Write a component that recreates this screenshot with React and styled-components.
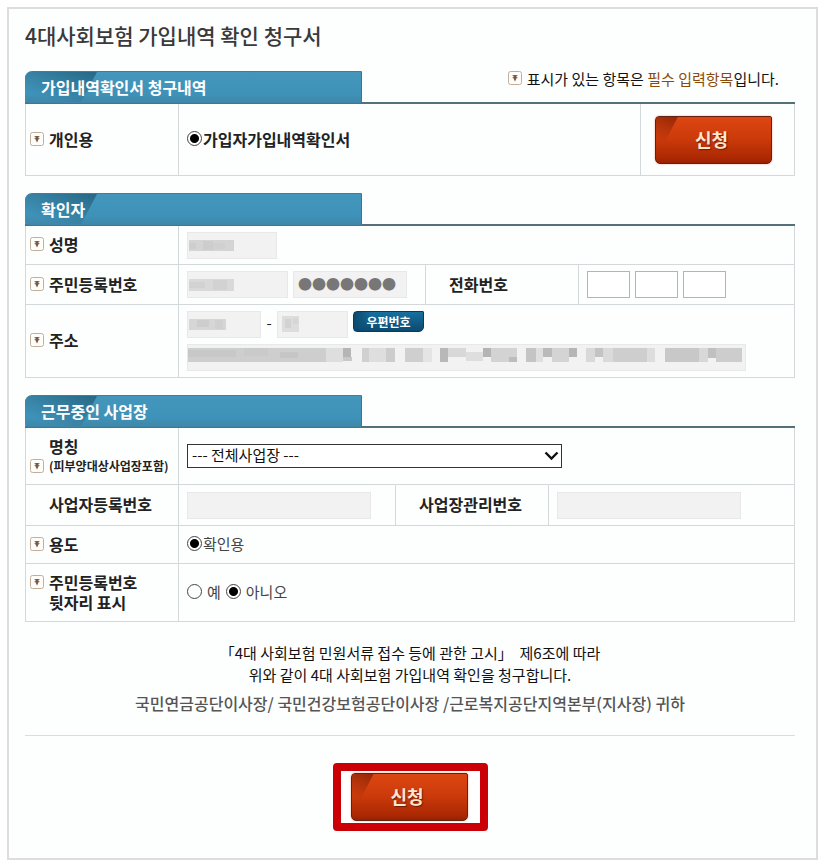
import React from 'react'
import styled, { createGlobalStyle, css } from 'styled-components'

const GlobalStyle = createGlobalStyle`
  * {
    box-sizing: border-box;
  }

  body {
    margin: 0;
    background: #fff;
    color: #222;
    font-family: "Noto Sans CJK KR", "Noto Sans", sans-serif;
    font-size: 15px;
  }

  input, select, button {
    margin: 0;
    font-family: inherit;
  }
`

const line = '#d3d8da'

const Frame = styled.main`
  margin: 7px;
  padding: 12px 21px 27px 16px;
  border: 2px solid #dddddd;
  background: #fdfefe;
`

const Title = styled.h1`
  margin: 0 0 22px;
  color: #3a3a3a;
  font-size: 21px;
  font-weight: 500;
  line-height: 28px;
`

const Section = styled.section`
  margin-bottom: 17px;
`

const SectionHead = styled.div`
  display: flex;
  align-items: flex-start;
  justify-content: space-between;
  height: 33px;
  border-bottom: 2px solid #56707a;
`

const Tab = styled.h2`
  position: relative;
  width: 337px;
  height: 33px;
  margin: 0;
  padding-left: 16px;
  overflow: hidden;
  border-top: 1px solid #3f7f9a;
  border-right: 1px solid #44728a;
  border-bottom: 1px solid #3b7894;
  border-radius: 7px 0 0 4px;
  background: linear-gradient(#4496bb, #3e92b9 70%, #3f86a8);
  color: #fff;
  font-size: 16px;
  font-weight: 700;
  line-height: 30px;

  &::before {
    content: "";
    position: absolute;
    top: 0;
    left: 0;
    width: 72px;
    height: 30px;
    background: linear-gradient(200deg, #286a88 5%, rgba(62, 146, 185, 0) 80%);
    clip-path: polygon(0 0, 100% 0, 78% 100%, 0 100%);
  }

  span {
    position: relative;
  }
`

const Hint = styled.p`
  display: flex;
  align-items: center;
  gap: 5px;
  margin: 0;
  padding-right: 16px;
  color: #111;
  line-height: 13px;

  em {
    color: #8a4b08;
    font-style: normal;
  }
`

const Rows = styled.div`
  border: solid ${line};
  border-width: 0 1px;
`

const Row = styled.div`
  display: flex;
  min-height: ${(p) => p.$height}px;
  border-bottom: 1px solid ${line};
`

const LabelCell = styled.div`
  display: flex;
  flex: none;
  align-items: ${(p) => p.$align || 'center'};
  gap: 5px;
  width: 153px;
  padding: ${(p) => (p.$align ? '8px 0 8px 4px' : '0 0 2px 4px')};
  border-right: 1px solid ${line};
  font-size: 16px;
  font-weight: 700;
  line-height: 20px;

  ${(p) => p.$plain && css`
    padding-left: 23px;
  `}

  svg {
    flex: none;
    margin: 3px 0;
  }

  small {
    display: block;
    font-size: 12px;
    white-space: nowrap;
  }
`

const FieldCell = styled.div`
  display: flex;
  flex: ${(p) => (p.$width ? `0 0 ${p.$width}px` : '1')};
  flex-direction: ${(p) => (p.$stack ? 'column' : 'row')};
  align-items: ${(p) => (p.$stack ? 'flex-start' : 'center')};
  justify-content: ${(p) => (p.$stack ? 'center' : 'flex-start')};
  gap: ${(p) => (p.$stack ? 6 : 5)}px;
  min-width: 0;
  padding: 0 8px;

  & + & {
    padding-left: 14px;
    border-left: 1px solid ${line};
  }

  & + ${LabelCell} {
    border-left: 1px solid ${line};
    width: 154px;
  }
`

const Inline = styled.div`
  display: flex;
  align-items: flex-start;
  gap: 5px;
`

const Dash = styled.span`
  width: 6px;
  line-height: 24px;
  text-align: center;
`

const MaskBox = styled.span`
  position: relative;
  display: block;
  width: ${(p) => p.$width}px;
  max-width: 100%;

  svg {
    position: absolute;
    top: ${(p) => p.$top || 8}px;
    left: ${(p) => p.$left || 2}px;
  }
`

const TextInput = styled.input`
  display: block;
  width: ${(p) => (p.$width ? `${p.$width}px` : '100%')};
  height: 27px;
  padding: 0 4px;
  border: 1px solid #b4b4b4;
  border-radius: 0;
  background: #fff;
  font-size: 14px;

  &:read-only {
    border-color: #e8e8e8;
    background: #f2f2f2;
    color: #777;
  }
`

const DotInput = styled(TextInput)`
  padding-bottom: 4px;
`

const Option = styled.label`
  display: inline-flex;
  align-items: center;
  gap: ${(p) => p.$gap || 1}px;
  padding-bottom: 2px;
  color: ${(p) => (p.$bold ? '#222' : '#444')};
  font-size: ${(p) => (p.$bold ? 16 : 15)}px;
  font-weight: ${(p) => (p.$bold ? 700 : 400)};
  line-height: 20px;
`

const Radio = styled.input`
  flex: none;
  width: 15px;
  height: 15px;
  border: 1px solid #444;
  border-radius: 50%;
  appearance: none;
  background: #fff;

  &:checked {
    background: radial-gradient(circle, #000 4px, #fff 5px);
  }
`

const SelectBox = styled.div`
  position: relative;
  width: 375px;
  max-width: 100%;

  svg {
    position: absolute;
    top: 7px;
    right: 3px;
    pointer-events: none;
  }
`

const Select = styled.select`
  display: block;
  width: 100%;
  height: 24px;
  padding: 0 24px 2px 4px;
  border: 1px solid #333;
  border-radius: 0;
  appearance: none;
  background: #fff;
  color: #111;
  font-size: 15px;
  line-height: 20px;
`

const ZipButton = styled.button`
  width: 71px;
  height: 21px;
  padding: 0;
  border: 1px solid #0b3a55;
  border-radius: 4px 1px 5px 4px;
  background: linear-gradient(115deg, #0b4668, rgba(11, 70, 104, 0) 24%), linear-gradient(#17709f, #0b4a70);
  color: #fff;
  font-size: 12px;
  font-weight: 700;
  line-height: 18px;
`

const ApplyButton = styled.button`
  position: relative;
  display: block;
  width: 117px;
  height: 48px;
  padding: 0 4px 2px 0;
  overflow: hidden;
  border: 1px solid #63210f;
  border-radius: 4px 2px 5px 5px;
  background: linear-gradient(#dc4612, #cd3b0b 45%, #ab2802 90%, #982002);
  box-shadow: 0 0 2px #f0a08a;
  color: #ffe6d2;
  font-size: 18px;
  font-weight: 700;
  text-shadow: 1px 1px 1px #6b1c08;

  &::before {
    content: "";
    position: absolute;
    top: 0;
    left: 0;
    width: 22px;
    height: 30px;
    background: linear-gradient(200deg, #932606, rgba(190, 50, 8, 0) 80%);
    clip-path: polygon(0 0, 100% 0, 30% 100%, 0 100%);
  }
`

const Notice = styled.div`
  margin-top: 20px;
  padding-bottom: 20px;
  border-bottom: 1px solid #dcdcdc;
  color: #111;
  text-align: center;

  p {
    margin: 0;
    line-height: 22px;
    white-space: pre-wrap;
  }
`

const Recipients = styled.p`
  && {
    margin-top: 5px;
    color: #555;
    font-size: 16px;
    font-weight: 500;
    line-height: 24px;
  }
`

const Submit = styled.div`
  width: fit-content;
  margin: 27px auto 0;
  padding: 2px 12px 2px 10px;
  border: 8px solid #cb0006;
  border-radius: 4px;
  background: #fff;
`

function RequiredIcon() {
  return (
    <svg width="14" height="14" viewBox="0 0 14 14" aria-hidden="true">
      <rect x="0.5" y="0.5" width="13" height="13" rx="2" fill="#fffdfa" stroke="#c2ae9b" />
      <path d="M4.5 4.5h5M4.5 6.5h5" stroke="#9a8270" strokeWidth="1" />
      <path d="M5.5 4h3v3.5L7 10.5 5.5 7.5z" fill="#7b5a44" />
    </svg>
  )
}

// each block is [x, width, grey, y, height]
function Mosaic({ width, height, blocks }) {
  return (
    <svg width={width} height={height} aria-hidden="true">
      {blocks.map(([x, w, fill, y = 0, h = height]) => (
        <rect key={`${x}-${y}`} x={x} y={y} width={w} height={h} fill={fill} />
      ))}
    </svg>
  )
}

const nameBlocks = [[0, 45, '#d4d4d4'], [0, 7, '#cecece', 3, 6], [14, 10, '#cdcdcd', 1, 9], [24, 12, '#d0d0d0', 3, 6]]
const idBlocks = [[0, 45, '#d9d9d9'], [0, 16, '#d2d2d2', 3, 6], [24, 14, '#d2d2d2', 1, 10]]
const zipBlocks = [[0, 37, '#d6d6d6'], [8, 12, '#cdcdcd', 1, 7], [26, 8, '#d0d0d0', 1, 9]]
const zipTailBlocks = [[0, 17, '#dddddd'], [3, 6, '#d2d2d2', 3, 9], [11, 5, '#d6d6d6', 2, 6]]
const addressBlocks = [
  [0, 138, '#cecece'], [0, 48, '#c8c8c8', 2, 7], [56, 24, '#cacaca', 0, 8], [92, 18, '#c6c6c6', 4, 6],
  [138, 17, '#dedede'], [155, 8, '#b5b5b5', 0, 9], [155, 9, '#c8c8c8', 9, 4], [174, 7, '#d0d0d0'],
  [181, 17, '#dedede'], [198, 9, '#cccccc'], [217, 18, '#cfcfcf'], [235, 9, '#e4e4e4'],
  [252, 8, '#b8b8b8'], [260, 18, '#d8d8d8', 0, 9], [278, 17, '#dedede', 4, 9], [295, 8, '#b4b4b4', 0, 9],
  [303, 26, '#d3d3d3'], [321, 8, '#bcbcbc', 9, 5], [338, 10, '#c4c4c4'], [348, 7, '#dfdfdf'],
  [355, 9, '#bababa', 0, 9], [364, 17, '#d4d4d4'], [381, 8, '#b6b6b6', 0, 9], [398, 9, '#d9d9d9'],
  [407, 8, '#c3c3c3', 0, 9], [415, 10, '#dadada'], [425, 34, '#cecece'], [459, 8, '#dddddd'],
  [477, 34, '#c8c8c8'], [511, 9, '#d8d8d8'], [520, 8, '#c0c0c0', 0, 10], [528, 26, '#cdcdcd'],
]

function MaskedInput({ width, label, id, top, left, mosaic }) {
  return (
    <MaskBox $width={width} $top={top} $left={left}>
      <TextInput id={id} aria-label={label} readOnly />
      <Mosaic {...mosaic} />
    </MaskBox>
  )
}

function Head({ title, children }) {
  return (
    <SectionHead>
      <Tab><span>{title}</span></Tab>
      {children}
    </SectionHead>
  )
}

function App() {
  return (
    <Frame>
      <GlobalStyle />
      <Title>4대사회보험 가입내역 확인 청구서</Title>

      <form onSubmit={(e) => e.preventDefault()}>
        <Section>
          <Head title="가입내역확인서 청구내역">
            <Hint>
              <RequiredIcon />
              <span>표시가 있는 항목은 <em>필수 입력항목</em>입니다.</span>
            </Hint>
          </Head>
          <Rows>
            <Row $height={72}>
              <LabelCell>
                <RequiredIcon />
                <span id="personal">개인용</span>
              </LabelCell>
              <FieldCell role="radiogroup" aria-labelledby="personal">
                <Option $bold>
                  <Radio type="radio" name="document" defaultChecked />
                  가입자가입내역확인서
                </Option>
              </FieldCell>
              <FieldCell $width={154}>
                <ApplyButton type="submit">신청</ApplyButton>
              </FieldCell>
            </Row>
          </Rows>
        </Section>

        <Section>
          <Head title="확인자" />
          <Rows>
            <Row $height={39}>
              <LabelCell>
                <RequiredIcon />
                <label htmlFor="name">성명</label>
              </LabelCell>
              <FieldCell>
                <MaskedInput id="name" width={90} mosaic={{ width: 45, height: 11, blocks: nameBlocks }} />
              </FieldCell>
            </Row>
            <Row $height={40}>
              <LabelCell>
                <RequiredIcon />
                <label htmlFor="resident">주민등록번호</label>
              </LabelCell>
              <FieldCell>
                <MaskedInput id="resident" width={101} mosaic={{ width: 45, height: 12, blocks: idBlocks }} />
                <DotInput $width={114} aria-label="주민등록번호 뒷자리" value="●●●●●●●" readOnly />
              </FieldCell>
              <LabelCell $plain>
                <label htmlFor="phone">전화번호</label>
              </LabelCell>
              <FieldCell $width={215}>
                <TextInput id="phone" $width={43} />
                <TextInput $width={43} aria-label="전화번호 가운데" />
                <TextInput $width={43} aria-label="전화번호 끝" />
              </FieldCell>
            </Row>
            <Row $height={73}>
              <LabelCell>
                <RequiredIcon />
                <label htmlFor="zip">주소</label>
              </LabelCell>
              <FieldCell $stack>
                <Inline>
                  <MaskedInput id="zip" width={74} mosaic={{ width: 37, height: 11, blocks: zipBlocks }} />
                  <Dash>-</Dash>
                  <MaskedInput width={71} top={5} left={5} label="우편번호 뒷자리" mosaic={{ width: 17, height: 16, blocks: zipTailBlocks }} />
                  <ZipButton type="button">우편번호</ZipButton>
                </Inline>
                <MaskedInput width={559} top={4} left={1} label="상세주소" mosaic={{ width: 554, height: 14, blocks: addressBlocks }} />
              </FieldCell>
            </Row>
          </Rows>
        </Section>

        <Section>
          <Head title="근무중인 사업장" />
          <Rows>
            <Row $height={57}>
              <LabelCell $align="flex-end">
                <RequiredIcon />
                <label htmlFor="workplace">명칭<small>(피부양대상사업장포함)</small></label>
              </LabelCell>
              <FieldCell>
                <SelectBox>
                  <Select id="workplace">
                    <option>--- 전체사업장 ---</option>
                  </Select>
                  <svg width="15" height="10" viewBox="0 0 15 10" aria-hidden="true">
                    <path d="M1.5 1.5l6 6 6-6" fill="none" stroke="#111" strokeWidth="2.4" />
                  </svg>
                </SelectBox>
              </FieldCell>
            </Row>
            <Row $height={41}>
              <LabelCell $plain>
                <label htmlFor="bizno">사업자등록번호</label>
              </LabelCell>
              <FieldCell>
                <TextInput id="bizno" $width={184} readOnly />
              </FieldCell>
              <LabelCell $plain>
                <label htmlFor="manageno">사업장관리번호</label>
              </LabelCell>
              <FieldCell $width={245}>
                <TextInput id="manageno" $width={184} readOnly />
              </FieldCell>
            </Row>
            <Row $height={38}>
              <LabelCell>
                <RequiredIcon />
                <span id="usage">용도</span>
              </LabelCell>
              <FieldCell role="radiogroup" aria-labelledby="usage">
                <Option>
                  <Radio type="radio" name="usage" defaultChecked />
                  확인용
                </Option>
              </FieldCell>
            </Row>
            <Row $height={58}>
              <LabelCell $align="flex-start">
                <RequiredIcon />
                <span id="reveal">주민등록번호<br />뒷자리 표시</span>
              </LabelCell>
              <FieldCell role="radiogroup" aria-labelledby="reveal">
                <Option $gap={5}>
                  <Radio type="radio" name="reveal" />
                  예
                </Option>
                <Option $gap={5}>
                  <Radio type="radio" name="reveal" defaultChecked />
                  아니오
                </Option>
              </FieldCell>
            </Row>
          </Rows>
        </Section>

        <Notice>
          <p>「4대 사회보험 민원서류 접수 등에 관한 고시」  제6조에 따라</p>
          <p>위와 같이 4대 사회보험 가입내역 확인을 청구합니다.</p>
          <Recipients>국민연금공단이사장/ 국민건강보험공단이사장 /근로복지공단지역본부(지사장) 귀하</Recipients>
        </Notice>

        <Submit>
          <ApplyButton type="submit">신청</ApplyButton>
        </Submit>
      </form>
    </Frame>
  )
}

export default App
